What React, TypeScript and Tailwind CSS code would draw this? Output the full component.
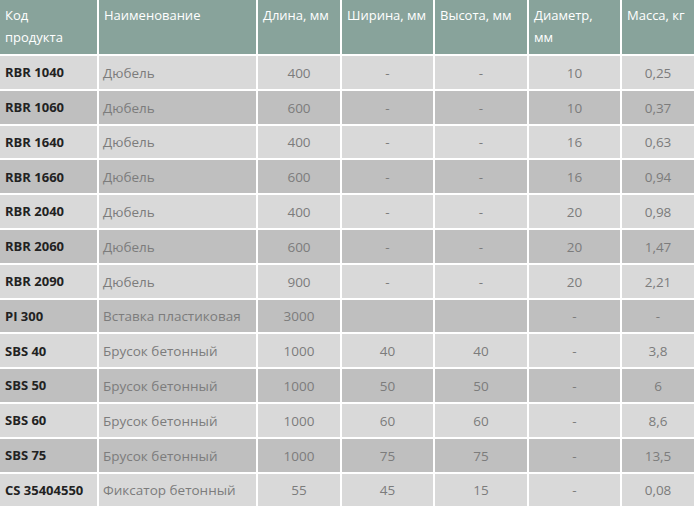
import React from "react";

const rows: string[][] = [
  ["RBR 1040", "Дюбель", "400", "-", "-", "10", "0,25"],
  ["RBR 1060", "Дюбель", "600", "-", "-", "10", "0,37"],
  ["RBR 1640", "Дюбель", "400", "-", "-", "16", "0,63"],
  ["RBR 1660", "Дюбель", "600", "-", "-", "16", "0,94"],
  ["RBR 2040", "Дюбель", "400", "-", "-", "20", "0,98"],
  ["RBR 2060", "Дюбель", "600", "-", "-", "20", "1,47"],
  ["RBR 2090", "Дюбель", "900", "-", "-", "20", "2,21"],
  ["PI 300", "Вставка пластиковая", "3000", "", "", "-", "-"],
  ["SBS 40", "Брусок бетонный", "1000", "40", "40", "-", "3,8"],
  ["SBS 50", "Брусок бетонный", "1000", "50", "50", "-", "6"],
  ["SBS 60", "Брусок бетонный", "1000", "60", "60", "-", "8,6"],
  ["SBS 75", "Брусок бетонный", "1000", "75", "75", "-", "13,5"],
  ["CS 35404550", "Фиксатор бетонный", "55", "45", "15", "-", "0,08"],
];

const headers: React.ReactNode[] = [
  <>Код<br />продукта</>,
  "Наименование",
  "Длина, мм",
  "Ширина, мм",
  "Высота, мм",
  <>Диаметр,<br />мм</>,
  "Масса, кг",
];

export default function App() {
  return (
    <div
      className="w-[696px] h-[508px] bg-white overflow-hidden"
      style={{ fontFamily: '"Open Sans", "Noto Sans", sans-serif' }}
    >
      <div className="grid grid-cols-[97px_157px_82px_91px_92px_91px_72px] grid-rows-[54px_repeat(13,32.8px)] gap-[2px] text-[13px]">
        {headers.map((h, i) => (
          <div
            key={i}
            className="bg-[#88a39b] text-white px-[5px] pt-[4px] leading-[22px]"
          >
            {h}
          </div>
        ))}
        {rows.map((r, ri) => {
          const bg = ri % 2 === 0 ? "bg-[#d9d9d9]" : "bg-[#bfbfbf]";
          return r.map((c, ci) => (
            <div
              key={ri + "-" + ci}
              className={
                bg +
                " flex items-center pt-[1px] " +
                (ci === 0
                  ? "px-[5px] font-bold text-[#222222]"
                  : ci === 1
                  ? "px-[4px] text-[13.5px] text-[#7c7c7c]"
                  : "justify-center text-[13.5px] text-[#7c7c7c]")
              }
            >
              {c}
            </div>
          ));
        })}
      </div>
    </div>
  );
}
